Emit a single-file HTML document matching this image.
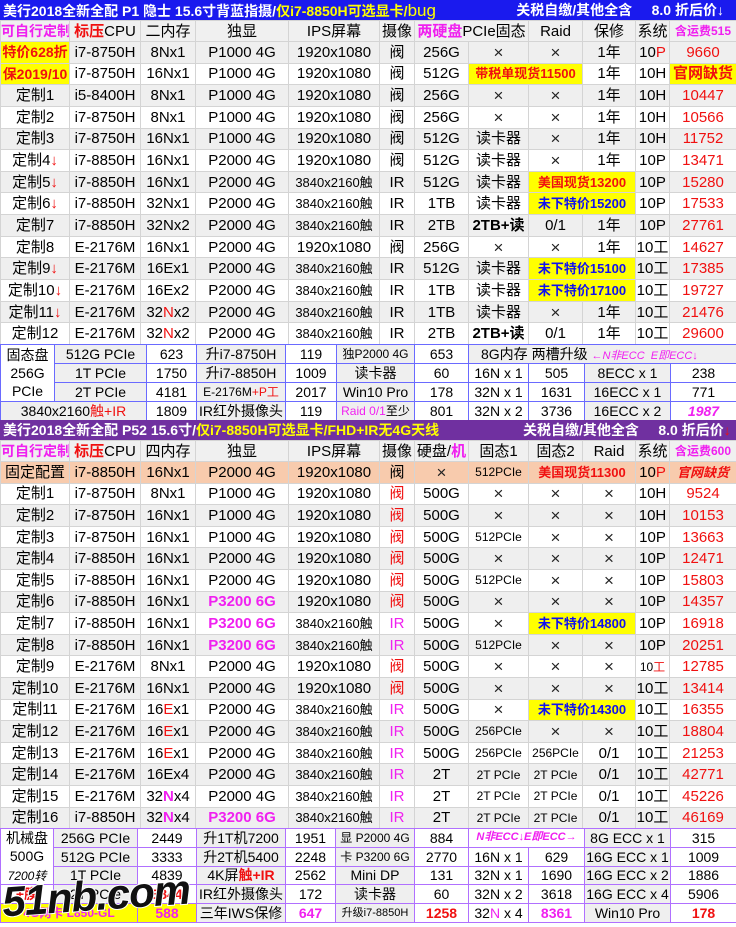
<!DOCTYPE html>
<html><head><meta charset="utf-8">
<style>
*{margin:0;padding:0;box-sizing:border-box}
body{width:736px;height:922px;overflow:hidden;background:#fff;font-family:"Liberation Sans","Noto Sans CJK SC",sans-serif;font-size:15px;color:#000;position:relative}
table{position:absolute;left:0;width:736px;border-collapse:collapse;table-layout:fixed}
td{border:1px solid #d4d4d4;text-align:center;white-space:nowrap;overflow:hidden;padding:0;line-height:1}
.d tr:nth-child(even) td{background:#efefef}
.t td{border:none;color:#fff;font-weight:bold;font-size:14px;text-align:left;padding-left:3px}
.h td{background:#f0f0f0}
.r{color:#f01010}.m{color:#f020f0}.b{font-weight:bold}
.y{background:#ffff00!important;color:#f01010;font-weight:bold}
.yb{background:#ffff00!important;color:#1010f0;font-weight:bold}
.pk td{background:#f8cbad!important}
.s td{font-size:14px}
.A td{border:1px solid #6a6aff}
.D td{border:1px solid #b070ff}
.g{background:#efefef}
.x{font-size:17px;font-weight:100;color:#222}
</style></head><body>

<table class="t" style="top:0;height:20px;background:#1a1aee"><tr><td style="width:500px">美行2018全新全配 P1 隐士 15.6寸背蓝指摄/<span style="color:#ff0">仅i7-8850H可选显卡/</span><span style="color:#ff0;font-size:17px;font-weight:normal">bug</span></td><td style="text-align:right;padding-right:12px">关税自缴/其他全含 &nbsp;&nbsp;&nbsp; 8.0 折后价↓</td></tr></table>

<table class="d" style="top:20px">
<colgroup><col style="width:69px"><col style="width:71px"><col style="width:55px"><col style="width:93px"><col style="width:91px"><col style="width:35px"><col style="width:54px"><col style="width:60px"><col style="width:54px"><col style="width:53px"><col style="width:34px"><col style="width:67px"></colgroup>
<tr class="h" style="height:21px"><td class="m b" style="font-size:14px">可自行定制</td><td><span class="r b">标压</span>CPU</td><td>二内存</td><td>独显</td><td>IPS屏幕</td><td>摄像</td><td colspan="2"><span class="m b">两硬盘</span>PCIe固态</td><td>Raid</td><td>保修</td><td>系统</td><td class="m b" style="font-size:12px">含运费515</td></tr>
<tr style="height:21.65px"><td class="y" style="font-size:14px">特价628折</td><td>i7-8750H</td><td>8Nx1</td><td>P1000 4G</td><td>1920x1080</td><td>阀</td><td>256G</td><td class="x">×</td><td class="x">×</td><td>1年</td><td>10<span class="r">P</span></td><td class="r">9660</td></tr>
<tr style="height:21.65px"><td class="y" style="font-size:14px">保2019/10</td><td>i7-8750H</td><td>16Nx1</td><td>P1000 4G</td><td>1920x1080</td><td>阀</td><td>512G</td><td colspan="2" class="y" style="font-size:13px">带税单现货11500</td><td>1年</td><td>10H</td><td class="y">官网缺货</td></tr>
<tr style="height:21.65px"><td>定制1</td><td>i5-8400H</td><td>8Nx1</td><td>P1000 4G</td><td>1920x1080</td><td>阀</td><td>256G</td><td class="x">×</td><td class="x">×</td><td>1年</td><td>10H</td><td class="r">10447</td></tr>
<tr style="height:21.65px"><td>定制2</td><td>i7-8750H</td><td>8Nx1</td><td>P1000 4G</td><td>1920x1080</td><td>阀</td><td>256G</td><td class="x">×</td><td class="x">×</td><td>1年</td><td>10H</td><td class="r">10566</td></tr>
<tr style="height:21.65px"><td>定制3</td><td>i7-8750H</td><td>16Nx1</td><td>P1000 4G</td><td>1920x1080</td><td>阀</td><td>512G</td><td>读卡器</td><td class="x">×</td><td>1年</td><td>10H</td><td class="r">11752</td></tr>
<tr style="height:21.65px"><td>定制4<span class="r">↓</span></td><td>i7-8850H</td><td>16Nx1</td><td>P2000 4G</td><td>1920x1080</td><td>阀</td><td>512G</td><td>读卡器</td><td class="x">×</td><td>1年</td><td>10P</td><td class="r">13471</td></tr>
<tr style="height:21.65px"><td>定制5<span class="r">↓</span></td><td>i7-8850H</td><td>16Nx1</td><td>P2000 4G</td><td style="font-size:13px">3840x2160触</td><td>IR</td><td>512G</td><td>读卡器</td><td colspan="2" class="y" style="font-size:13px">美国现货13200</td><td>10P</td><td class="r">15280</td></tr>
<tr style="height:21.65px"><td>定制6<span class="r">↓</span></td><td>i7-8850H</td><td>32Nx1</td><td>P2000 4G</td><td style="font-size:13px">3840x2160触</td><td>IR</td><td>1TB</td><td>读卡器</td><td colspan="2" class="yb" style="font-size:13px">未下特价15200</td><td>10P</td><td class="r">17533</td></tr>
<tr style="height:21.65px"><td>定制7</td><td>i7-8850H</td><td>32Nx2</td><td>P2000 4G</td><td style="font-size:13px">3840x2160触</td><td>IR</td><td>2TB</td><td class="b">2TB+读</td><td>0/1</td><td>1年</td><td>10P</td><td class="r">27761</td></tr>
<tr style="height:21.65px"><td>定制8</td><td>E-2176M</td><td>16Nx1</td><td>P2000 4G</td><td>1920x1080</td><td>阀</td><td>256G</td><td class="x">×</td><td class="x">×</td><td>1年</td><td>10工</td><td class="r">14627</td></tr>
<tr style="height:21.65px"><td>定制9<span class="r">↓</span></td><td>E-2176M</td><td>16Ex1</td><td>P2000 4G</td><td style="font-size:13px">3840x2160触</td><td>IR</td><td>512G</td><td>读卡器</td><td colspan="2" class="yb" style="font-size:13px">未下特价15100</td><td>10工</td><td class="r">17385</td></tr>
<tr style="height:21.65px"><td>定制10<span class="r">↓</span></td><td>E-2176M</td><td>16Ex2</td><td>P2000 4G</td><td style="font-size:13px">3840x2160触</td><td>IR</td><td>1TB</td><td>读卡器</td><td colspan="2" class="yb" style="font-size:13px">未下特价17100</td><td>10工</td><td class="r">19727</td></tr>
<tr style="height:21.65px"><td>定制11<span class="r">↓</span></td><td>E-2176M</td><td>32<span class="r">N</span>x2</td><td>P2000 4G</td><td style="font-size:13px">3840x2160触</td><td>IR</td><td>1TB</td><td>读卡器</td><td class="x">×</td><td>1年</td><td>10工</td><td class="r">21476</td></tr>
<tr style="height:21.65px"><td>定制12</td><td>E-2176M</td><td>32<span class="r">N</span>x2</td><td>P2000 4G</td><td style="font-size:13px">3840x2160触</td><td>IR</td><td>2TB</td><td class="b">2TB+读</td><td>0/1</td><td>1年</td><td>10工</td><td class="r">29600</td></tr>
</table>

<table class="A s" style="top:344px">
<colgroup><col style="width:54px"><col style="width:92px"><col style="width:50px"><col style="width:89px"><col style="width:51px"><col style="width:78px"><col style="width:54px"><col style="width:60px"><col style="width:56px"><col style="width:86px"><col style="width:66px"></colgroup>
<tr style="height:19px"><td rowspan="3" style="line-height:1.3">固态盘<br>256G<br>PCIe</td><td class="g">512G PCIe</td><td>623</td><td class="g">升i7-8750H</td><td>119</td><td class="g" style="font-size:12px">独P2000 4G</td><td>653</td><td colspan="4" class="g" style="text-align:left;padding-left:12px">8G内存 两槽升级 <span class="m" style="font-style:italic;font-size:11px">←N非ECC &nbsp;E即ECC↓</span></td></tr>
<tr style="height:19px"><td class="g">1T PCIe</td><td>1750</td><td class="g">升i7-8850H</td><td>1009</td><td class="g">读卡器</td><td>60</td><td>16N x 1</td><td>505</td><td class="g">8ECC x 1</td><td>238</td></tr>
<tr style="height:19px"><td class="g">2T PCIe</td><td>4181</td><td class="g" style="font-size:12px">E-2176M<span class="r">+P工</span></td><td>2017</td><td class="g">Win10 Pro</td><td>178</td><td>32N x 1</td><td>1631</td><td class="g">16ECC x 1</td><td>771</td></tr>
<tr style="height:19px"><td colspan="2" class="g">3840x2160<span class="r">触+IR</span></td><td>1809</td><td class="g">IR红外摄像头</td><td>119</td><td class="g" style="font-size:12px"><span class="m">Raid 0/1</span>至少</td><td>801</td><td>32N x 2</td><td>3736</td><td class="g">16ECC x 2</td><td class="m b" style="font-style:italic">1987</td></tr>
</table>

<table class="t" style="top:420px;height:20px;background:#7030a0"><tr><td style="width:520px">美行2018全新全配 P52 15.6寸/<span style="color:#ff0">仅i7-8850H可选显卡/FHD+IR无4G天线</span></td><td style="text-align:right;padding-right:12px">关税自缴/其他全含 &nbsp;&nbsp;&nbsp; 8.0 折后价<span class="r">↓</span></td></tr></table>

<table class="d" style="top:440px">
<colgroup><col style="width:69px"><col style="width:71px"><col style="width:55px"><col style="width:93px"><col style="width:91px"><col style="width:35px"><col style="width:54px"><col style="width:60px"><col style="width:54px"><col style="width:53px"><col style="width:34px"><col style="width:67px"></colgroup>
<tr class="h" style="height:21px"><td class="m b" style="font-size:14px">可自行定制</td><td><span class="r b">标压</span>CPU</td><td>四内存</td><td>独显</td><td>IPS屏幕</td><td>摄像</td><td>硬盘/<span class="m b">机</span></td><td>固态1</td><td>固态2</td><td>Raid</td><td>系统</td><td class="m b" style="font-size:12px">含运费600</td></tr>
<tr class="pk" style="height:21.6px"><td>固定配置</td><td>i7-8850H</td><td>16Nx1</td><td>P2000 4G</td><td>1920x1080</td><td>阀</td><td class="x">×</td><td style="font-size:12px">512PCIe</td><td colspan="2" class="y" style="font-size:13px">美国现货11300</td><td>10<span class="r">P</span></td><td class="r b" style="font-style:italic;font-size:13px">官网缺货</td></tr>
<tr style="height:21.6px"><td>定制1</td><td>i7-8750H</td><td>8Nx1</td><td>P1000 4G</td><td>1920x1080</td><td class="r">阀</td><td>500G</td><td class="x">×</td><td class="x">×</td><td class="x">×</td><td>10H</td><td class="r">9524</td></tr>
<tr style="height:21.6px"><td>定制2</td><td>i7-8750H</td><td>16Nx1</td><td>P1000 4G</td><td>1920x1080</td><td class="r">阀</td><td>500G</td><td class="x">×</td><td class="x">×</td><td class="x">×</td><td>10H</td><td class="r">10153</td></tr>
<tr style="height:21.6px"><td>定制3</td><td>i7-8750H</td><td>16Nx1</td><td>P1000 4G</td><td>1920x1080</td><td class="r">阀</td><td>500G</td><td style="font-size:12px">512PCIe</td><td class="x">×</td><td class="x">×</td><td>10P</td><td class="r">13663</td></tr>
<tr style="height:21.6px"><td>定制4</td><td>i7-8850H</td><td>16Nx1</td><td>P2000 4G</td><td>1920x1080</td><td class="r">阀</td><td>500G</td><td class="x">×</td><td class="x">×</td><td class="x">×</td><td>10P</td><td class="r">12471</td></tr>
<tr style="height:21.6px"><td>定制5</td><td>i7-8850H</td><td>16Nx1</td><td>P2000 4G</td><td>1920x1080</td><td class="r">阀</td><td>500G</td><td style="font-size:12px">512PCIe</td><td class="x">×</td><td class="x">×</td><td>10P</td><td class="r">15803</td></tr>
<tr style="height:21.6px"><td>定制6</td><td>i7-8850H</td><td>16Nx1</td><td class="m b">P3200 6G</td><td>1920x1080</td><td class="r">阀</td><td>500G</td><td class="x">×</td><td class="x">×</td><td class="x">×</td><td>10P</td><td class="r">14357</td></tr>
<tr style="height:21.6px"><td>定制7</td><td>i7-8850H</td><td>16Nx1</td><td class="m b">P3200 6G</td><td style="font-size:13px">3840x2160触</td><td class="m">IR</td><td>500G</td><td class="x">×</td><td colspan="2" class="yb" style="font-size:13px">未下特价14800</td><td>10P</td><td class="r">16918</td></tr>
<tr style="height:21.6px"><td>定制8</td><td>i7-8850H</td><td>16Nx1</td><td class="m b">P3200 6G</td><td style="font-size:13px">3840x2160触</td><td class="m">IR</td><td>500G</td><td style="font-size:12px">512PCIe</td><td class="x">×</td><td class="x">×</td><td>10P</td><td class="r">20251</td></tr>
<tr style="height:21.6px"><td>定制9</td><td>E-2176M</td><td>8Nx1</td><td>P2000 4G</td><td>1920x1080</td><td class="r">阀</td><td>500G</td><td class="x">×</td><td class="x">×</td><td class="x">×</td><td style="font-size:12px">10<span class="r">工</span></td><td class="r">12785</td></tr>
<tr style="height:21.6px"><td>定制10</td><td>E-2176M</td><td>16Nx1</td><td>P2000 4G</td><td>1920x1080</td><td class="r">阀</td><td>500G</td><td class="x">×</td><td class="x">×</td><td class="x">×</td><td>10工</td><td class="r">13414</td></tr>
<tr style="height:21.6px"><td>定制11</td><td>E-2176M</td><td>16<span class="r">E</span>x1</td><td>P2000 4G</td><td style="font-size:13px">3840x2160触</td><td class="m">IR</td><td>500G</td><td class="x">×</td><td colspan="2" class="yb" style="font-size:13px">未下特价14300</td><td>10工</td><td class="r">16355</td></tr>
<tr style="height:21.6px"><td>定制12</td><td>E-2176M</td><td>16<span class="r">E</span>x1</td><td>P2000 4G</td><td style="font-size:13px">3840x2160触</td><td class="m">IR</td><td>500G</td><td style="font-size:12px">256PCIe</td><td class="x">×</td><td class="x">×</td><td>10工</td><td class="r">18804</td></tr>
<tr style="height:21.6px"><td>定制13</td><td>E-2176M</td><td>16<span class="r">E</span>x1</td><td>P2000 4G</td><td style="font-size:13px">3840x2160触</td><td class="m">IR</td><td>500G</td><td style="font-size:12px">256PCIe</td><td style="font-size:12px">256PCIe</td><td>0/1</td><td>10工</td><td class="r">21253</td></tr>
<tr style="height:21.6px"><td>定制14</td><td>E-2176M</td><td>16Ex4</td><td>P2000 4G</td><td style="font-size:13px">3840x2160触</td><td class="m">IR</td><td>2T</td><td style="font-size:12px">2T PCIe</td><td style="font-size:12px">2T PCIe</td><td>0/1</td><td>10工</td><td class="r">42771</td></tr>
<tr style="height:21.6px"><td>定制15</td><td>E-2176M</td><td>32<span class="m b">N</span>x4</td><td>P2000 4G</td><td style="font-size:13px">3840x2160触</td><td class="m">IR</td><td>2T</td><td style="font-size:12px">2T PCIe</td><td style="font-size:12px">2T PCIe</td><td>0/1</td><td>10工</td><td class="r">45226</td></tr>
<tr style="height:21.6px"><td>定制16</td><td>i7-8850H</td><td>32<span class="m b">N</span>x4</td><td class="m b">P3200 6G</td><td style="font-size:13px">3840x2160触</td><td class="m">IR</td><td>2T</td><td style="font-size:12px">2T PCIe</td><td style="font-size:12px">2T PCIe</td><td>0/1</td><td>10工</td><td class="r">46169</td></tr>
</table>

<table class="D s" style="top:828px">
<colgroup><col style="width:53px"><col style="width:84px"><col style="width:59px"><col style="width:89px"><col style="width:50px"><col style="width:79px"><col style="width:54px"><col style="width:60px"><col style="width:56px"><col style="width:86px"><col style="width:66px"></colgroup>
<tr style="height:18.8px"><td rowspan="3" style="line-height:1.3">机械盘<br>500G<br><i style="font-size:12px">7200转</i></td><td class="g">256G PCIe</td><td>2449</td><td class="g">升1T机7200</td><td>1951</td><td class="g" style="font-size:12px">显 P2000 4G</td><td>884</td><td colspan="2" class="m b" style="font-style:italic;font-size:11px">N非ECC↓E即ECC→</td><td class="g">8G ECC x 1</td><td>315</td></tr>
<tr style="height:18.8px"><td class="g">512G PCIe</td><td>3333</td><td class="g">升2T机5400</td><td>2248</td><td class="g" style="font-size:12px">卡 P3200 6G</td><td>2770</td><td>16N x 1</td><td>629</td><td class="g">16G ECC x 1</td><td>1009</td></tr>
<tr style="height:18.8px"><td class="g">1T PCIe</td><td>4839</td><td class="g">4K屏<span class="r b">触+IR</span></td><td>2562</td><td class="g">Mini DP</td><td>131</td><td>32N x 1</td><td>1690</td><td class="g">16G ECC x 2</td><td>1886</td></tr>
<tr style="height:18.8px"><td class="r b">+膜</td><td class="g">2T PCIe</td><td class="r b">3844</td><td class="g">IR红外摄像头</td><td>172</td><td class="g">读卡器</td><td>60</td><td>32N x 2</td><td>3618</td><td class="g">16G ECC x 4</td><td>5906</td></tr>
<tr style="height:18.8px"><td colspan="2" class="m b" style="background:#ffff00;font-size:12px">4G网卡 L850-GL</td><td class="m b" style="background:#ffff00">588</td><td class="g">三年IWS保修</td><td class="m b">647</td><td class="g" style="font-size:11px">升级i7-8850H</td><td class="r b">1258</td><td>32<span class="m">N</span> x 4</td><td class="m b">8361</td><td class="g">Win10 Pro</td><td class="r b">178</td></tr>
</table>

<div style="position:absolute;left:2px;top:872px;font:italic bold 42px 'Liberation Sans',sans-serif;color:#111;letter-spacing:-1px;-webkit-text-stroke:2px #fff;paint-order:stroke fill;transform:rotate(-4deg)">51nb.com</div>
</body></html>
